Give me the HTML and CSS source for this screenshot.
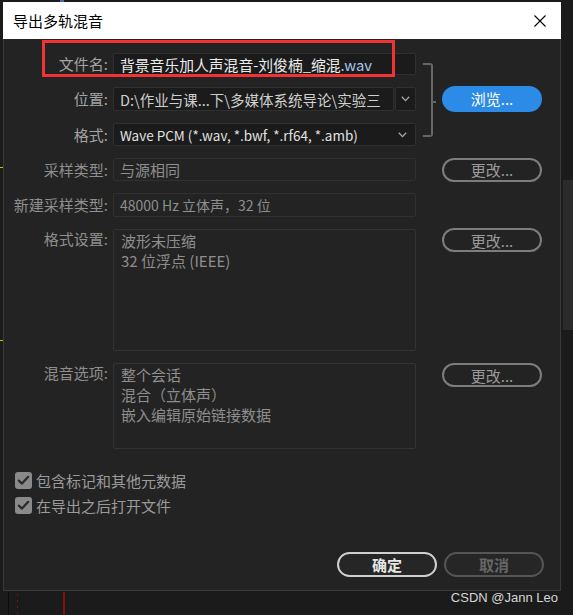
FILE: index.html
```html
<!DOCTYPE html>
<html lang="zh-CN">
<head>
<meta charset="utf-8">
<title>导出多轨混音</title>
<link rel="stylesheet" href="styles.css">
</head>
<body>
<div class="deco deco-top"></div>
<div class="deco deco-ymark1"></div>
<div class="deco deco-ymark2"></div>
<div class="deco deco-scroll"></div>
<div class="deco deco-v1"></div>
<div class="deco deco-v2"></div>
<div class="deco deco-v3"></div>

<div class="dialog">
  <div class="titlebar">
    <span class="title">导出多轨混音</span>
    <svg class="close" width="12" height="12" viewBox="0 0 12 12"><path d="M0.5 0.5 L11.5 11.5 M11.5 0.5 L0.5 11.5" stroke="#000" stroke-width="1.1" fill="none"/></svg>
  </div>
  <div class="body">
    <div class="form">
      <div class="lbl r1">文件名:</div>
      <div class="field dark name r1">背景音乐加人声混音-刘俊楠_缩混<span class="ext">.wav</span></div>
      <div class="bracket"></div>

      <div class="lbl r2">位置:</div>
      <div class="combo r2">
        <div class="field dark path">D:\作业与课...下\多媒体系统导论\实验三</div>
        <div class="field dark drop"><svg width="9" height="6" viewBox="0 0 9 6"><path d="M0.8 0.8 L4.5 4.6 L8.2 0.8" stroke="#a8a8a8" stroke-width="1.3" fill="none"/></svg></div>
      </div>
      <button class="browse r2">浏览...</button>

      <div class="lbl r3">格式:</div>
      <div class="field dark select r3"><span class="fmt">Wave PCM (*.wav, *.bwf, *.rf64, *.amb)</span><svg width="9" height="6" viewBox="0 0 9 6"><path d="M0.8 0.8 L4.5 4.6 L8.2 0.8" stroke="#a8a8a8" stroke-width="1.3" fill="none"/></svg></div>

      <div class="lbl dim r4">采样类型:</div>
      <div class="field off r4">与源相同</div>
      <button class="change r4">更改...</button>

      <div class="lbl dim r5">新建采样类型:</div>
      <div class="field off small r5">48000 Hz 立体声，32 位</div>

      <div class="lbl dim top r6">格式设置:</div>
      <div class="area r6">波形未压缩<br>32 位浮点 (IEEE)</div>
      <button class="change top r6">更改...</button>

      <div class="lbl dim top r7">混音选项:</div>
      <div class="area r7">整个会话<br>混合（立体声）<br>嵌入编辑原始链接数据</div>
      <button class="change top r7">更改...</button>
    </div>

    <div class="checks">
      <label class="check"><span class="box"><svg width="13" height="11" viewBox="0 0 13 11"><path d="M1.8 5.6 L5 8.6 L11.2 1.8" stroke="#2a2a2a" stroke-width="2.2" fill="none" stroke-linecap="round" stroke-linejoin="round"/></svg></span>包含标记和其他元数据</label>
      <label class="check"><span class="box"><svg width="13" height="11" viewBox="0 0 13 11"><path d="M1.8 5.6 L5 8.6 L11.2 1.8" stroke="#2a2a2a" stroke-width="2.2" fill="none" stroke-linecap="round" stroke-linejoin="round"/></svg></span>在导出之后打开文件</label>
    </div>

    <div class="actions">
      <button class="btn ok">确定</button>
      <button class="btn cancel">取消</button>
    </div>
  </div>
</div>

<div class="highlight"></div>
<div class="watermark">CSDN @Jann Leo</div>
</body>
</html>
```

FILE: styles.css
```css
* { box-sizing: border-box; }

html, body {
  margin: 0;
  padding: 0;
}

body {
  width: 573px;
  height: 615px;
  overflow: hidden;
  background: #1b1b1b;
  font-family: "Noto Sans CJK SC", "Noto Sans", sans-serif;
  position: relative;
}

/* background app decorations */
.deco { position: absolute; }
.deco-top { left: 60px; top: 0; width: 4px; height: 2px; background: #3b6fb0; }
.deco-ymark1 { left: 0; top: 167px; width: 3px; height: 1px; background: #c9c400; }
.deco-ymark2 { left: 0; top: 340px; width: 3px; height: 1px; background: #c9c400; }
.deco-scroll { left: 563px; top: 180px; width: 10px; height: 150px; background: #2b2b2b; }
.deco-v1 { left: 8px; top: 592px; width: 1px; height: 23px; background: #0c0c0c; }
.deco-v2 { left: 17px; top: 594px; width: 1px; height: 21px; background: repeating-linear-gradient(#7a1515 0 2px, transparent 2px 6px); }
.deco-v3 { left: 63px; top: 592px; width: 2px; height: 23px; background: #7e1212; }

.dialog {
  margin: 2px 0 0 3px;
  width: 558px;
}

.titlebar {
  height: 37px;
  background: #ffffff;
  display: flex;
  align-items: center;
  justify-content: space-between;
  padding: 0 15px 0 10px;
}

.title {
  font-size: 15px;
  color: #000;
  line-height: 1;
}

.close { display: block; }

.body {
  height: 552px;
  background: #232323;
  border: 1px solid #3a3a3a;
  border-top: none;
  padding: 14px 16px 0 0;
}

.form {
  display: grid;
  grid-template-columns: 109px 303px 26px 100px;
  grid-template-rows: 22px 24px 23px 23px 24px 122px 86px;
  row-gap: 12px;
  align-items: center;
}

.r1 { grid-row: 1; }
.r2 { grid-row: 2; }
.r3 { grid-row: 3; }
.r4 { grid-row: 4; }
.r5 { grid-row: 5; }
.r6 { grid-row: 6; }
.r7 { grid-row: 7; }

.lbl {
  grid-column: 1;
  text-align: right;
  padding-right: 5px;
  font-size: 15px;
  line-height: 20px;
  color: #a3a3a3;
  white-space: nowrap;
}
.lbl.dim { color: #8e8e8e; }
.lbl.top { align-self: start; }

.field {
  grid-column: 2;
  height: 100%;
  border: 1px solid #303030;
  border-radius: 2px;
  display: flex;
  align-items: center;
  padding-left: 6px;
  font-size: 15px;
  white-space: nowrap;
  overflow: hidden;
}
.field.dark { background: #1b1b1b; color: #e2e2e2; }
.field.name { color: #ececec; font-size: 14.8px; }
.ext { color: #a9c6ea; }
.field.off { background: #232323; color: #8e8e8e; }
.field.small { font-size: 14px; }

.combo {
  grid-column: 2;
  height: 100%;
  display: flex;
  gap: 1px;
}
.combo .path { flex: 1; color: #cfcfcf; font-size: 14.5px; }
.combo .drop {
  flex: 0 0 21px;
  padding: 0;
  justify-content: center;
}
.select {
  justify-content: space-between;
  padding-right: 8px;
  color: #cfcfcf;
}
.fmt { font-size: 13.5px; }

.bracket {
  grid-column: 3;
  grid-row: 1 / 4;
  align-self: stretch;
  margin: 10px 0 9px 7px;
  width: 10px;
  border: 2px solid #666;
  border-left: none;
  border-radius: 0 3px 3px 0;
  position: relative;
}
.bracket::after {
  content: "";
  position: absolute;
  right: -5px;
  top: 36px;
  width: 4px;
  height: 2px;
  background: #666;
}

button {
  font-family: inherit;
  margin: 0;
  cursor: default;
}

.browse {
  grid-column: 4;
  height: 26px;
  border: none;
  border-radius: 13px;
  background: #2c8be6;
  color: #fff;
  font-size: 15px;
  padding: 0;
  line-height: 26px;
}

.change {
  grid-column: 4;
  height: 24px;
  border: 2px solid #7d7d7d;
  border-radius: 12px;
  background: transparent;
  color: #9a9a9a;
  font-size: 15px;
  padding: 0;
  line-height: 19px;
}
.change.top { align-self: start; }
.change.r6 { margin-top: -1px; }

.area {
  grid-column: 2;
  height: 100%;
  border: 1px solid #333;
  border-radius: 2px;
  background: #232323;
  padding: 1px 7px;
  font-size: 15px;
  line-height: 20px;
  color: #8e8e8e;
}

.checks {
  margin-top: 23px;
  padding-left: 11px;
  display: flex;
  flex-direction: column;
  gap: 8px;
}
.check {
  display: flex;
  align-items: center;
  gap: 4px;
  font-size: 15px;
  line-height: 17px;
  color: #9a9a9a;
}
.box {
  width: 17px;
  height: 17px;
  border-radius: 3px;
  background: #8a8a8a;
  display: flex;
  align-items: center;
  justify-content: center;
}

.actions {
  margin-top: 38px;
  display: flex;
  justify-content: flex-end;
  gap: 7px;
}
.btn {
  width: 100px;
  height: 25px;
  border-radius: 13px;
  background: #262626;
  font-size: 15px;
  padding: 0;
  line-height: 20px;
}
.btn.ok {
  border: 2px solid #cfcfcf;
  color: #e6e6e6;
  font-weight: bold;
}
.btn.cancel {
  border: 2px solid #555;
  color: #666;
  font-weight: bold;
}

.highlight {
  position: absolute;
  left: 42px;
  top: 40px;
  width: 353px;
  height: 37px;
  border: 3px solid #f23333;
}

.watermark {
  position: absolute;
  right: 15px;
  top: 590px;
  font-family: "Liberation Sans", Arial, sans-serif;
  font-size: 13px;
  color: #d6d6d6;
  line-height: 16px;
}
```
